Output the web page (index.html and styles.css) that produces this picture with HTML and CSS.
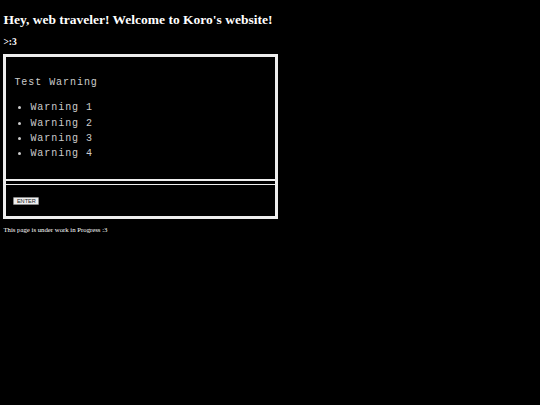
FILE: index.html
```html
<!DOCTYPE html>
<html lang="en">
<head>
    <meta charset="UTF-8">
    <meta name="viewport" content="width=device-width, initial-scale=1.0">
    <title>Koro's website</title>
    <link rel="stylesheet" href="styles.css">
</head>
<body>
    <h1>Hey, web traveler! Welcome to Koro's website!</h1>
    <h3>&gt;:3</h3>

    <div class="terminal">
        <div class="term-output">
            <p class="term-title">Test Warning</p>
            <ul class="term-list">
                <li>Warning 1</li>
                <li>Warning 2</li>
                <li>Warning 3</li>
                <li>Warning 4</li>
            </ul>
        </div>
        <div class="term-input">
            <button>ENTER</button>
        </div>
    </div>

    <p class="note">This page is under work in Progress :3</p>
</body>
</html>
```

FILE: styles.css
```css
body {
    font-family: "Liberation Serif", serif;
    background-color: #000;
    color: #fff;
    margin: 3.4px;
}
h1 {
    font-size: 13.5px;
    margin: 9px 0;
}
h3 {
    font-size: 9.5px;
    margin: 8px 0 7px;
}
.terminal {
    width: 269px;
    border: 3px solid #eee;
    font-family: "Liberation Mono", monospace;
    color: #ccc;
    letter-spacing: 0.95px;
}
.term-output {
    padding: 20px 8px 17px;
    border-bottom: 2px solid #eee;
    margin-bottom: 3px;
}
.term-title {
    font-size: 10px;
    margin: 0 0 12px;
}
.term-list {
    font-size: 10px;
    margin: 0;
    padding-left: 16px;
}
.term-list li {
    line-height: 15.3px;
}
.term-input {
    border-top: 1.5px solid #eee;
    padding: 12px 7px 11px;
    line-height: 0;
}
.term-input button {
    font-family: "Liberation Sans", sans-serif;
    font-size: 5.6px;
    line-height: 6px;
    letter-spacing: 0;
    padding: 0 2.5px;
    border: 1px solid #888;
    border-radius: 1px;
    background-color: #efefef;
    color: #222;
}
.note {
    font-size: 6.75px;
    margin: 7px 0;
}
```
